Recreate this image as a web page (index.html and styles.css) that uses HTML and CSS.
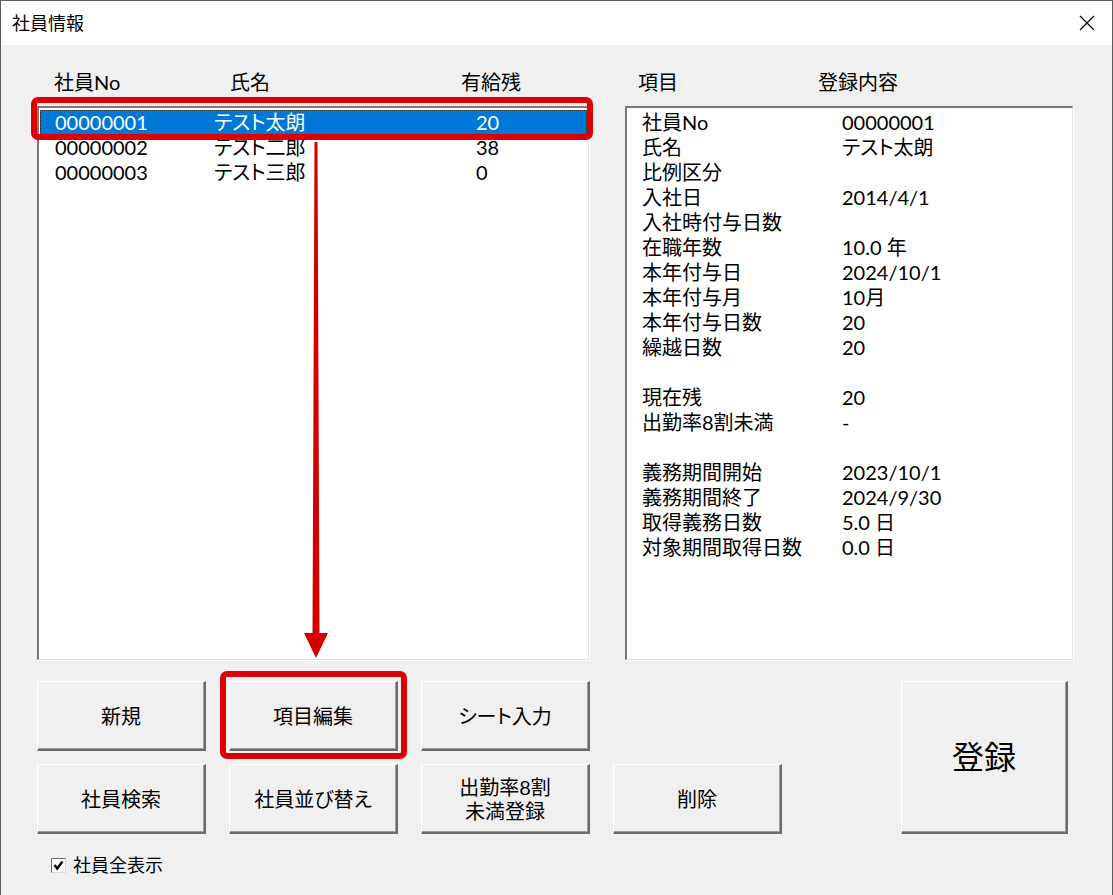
FILE: index.html
```html
<!DOCTYPE html>
<html lang="ja">

<head>
    <meta charset="UTF-8">
    <meta name="viewport" content="width=device-width, initial-scale=1.0">
    <title>社員情報</title>

    <link rel="stylesheet" href="styles.css">
</head>

<body>
    <div class="window">
        <div class="titlebar">
            <p class="title">社員情報</p>
            <div class="close">
                <svg width="16" height="16" viewBox="0 0 16 16">
                    <path d="M1 1 L15 15 M15 1 L1 15" stroke="#000" stroke-width="1.2" fill="none" />
                </svg>
            </div>
        </div>

        <div class="main">
            <div class="panel">
                <div class="list-head emp-cols">
                    <span>社員No</span>
                    <span>氏名</span>
                    <span>有給残</span>
                </div>
                <div class="listbox">
                    <div class="emp-row emp-cols selected">
                        <span>00000001</span><span>テスト太朗</span><span>20</span>
                    </div>
                    <div class="emp-row emp-cols">
                        <span>00000002</span><span>テスト二郎</span><span>38</span>
                    </div>
                    <div class="emp-row emp-cols">
                        <span>00000003</span><span>テスト三郎</span><span>0</span>
                    </div>
                </div>
            </div>

            <div class="panel">
                <div class="list-head detail-head">
                    <span>項目</span>
                    <span>登録内容</span>
                </div>
                <div class="listbox detail-box">
                    <span>社員No</span><span>00000001</span>
                    <span>氏名</span><span>テスト太朗</span>
                    <span>比例区分</span><span></span>
                    <span>入社日</span><span>2014/4/1</span>
                    <span>入社時付与日数</span><span></span>
                    <span>在職年数</span><span>10.0 年</span>
                    <span>本年付与日</span><span>2024/10/1</span>
                    <span>本年付与月</span><span>10月</span>
                    <span>本年付与日数</span><span>20</span>
                    <span>繰越日数</span><span>20</span>
                    <span></span><span></span>
                    <span>現在残</span><span>20</span>
                    <span>出勤率8割未満</span><span>-</span>
                    <span></span><span></span>
                    <span>義務期間開始</span><span>2023/10/1</span>
                    <span>義務期間終了</span><span>2024/9/30</span>
                    <span>取得義務日数</span><span>5.0 日</span>
                    <span>対象期間取得日数</span><span>0.0 日</span>
                </div>
            </div>
        </div>

        <div class="buttons">
            <button class="btn">新規</button>
            <button class="btn">項目編集</button>
            <button class="btn">シート入力</button>
            <button class="btn btn-big">登録</button>
            <button class="btn">社員検索</button>
            <button class="btn">社員並び替え</button>
            <button class="btn">出勤率8割<br>未満登録</button>
            <button class="btn">削除</button>
        </div>

        <label class="check-row">
            <span class="checkbox">
                <svg width="11" height="11" viewBox="0 0 11 11">
                    <path d="M1.5 5 L4.2 8.5 L9.5 1.5" stroke="#000" stroke-width="2.4" fill="none" />
                </svg>
            </span>
            社員全表示
        </label>
    </div>

    <!-- red annotations drawn on top of the dialog -->
    <svg class="marks" width="1113" height="895" viewBox="0 0 1113 895">
        <rect x="34" y="100" width="556" height="37" rx="4" fill="none" stroke="#dc0000" stroke-width="6" />
        <rect x="223" y="674" width="181" height="82" rx="4" fill="none" stroke="#dc0000" stroke-width="6" />
        <polygon points="314.5,142 317.5,142 319.5,633 328,633 316,658 304,633 312.5,633" fill="#d40000" />
    </svg>
</body>

</html>
```

FILE: styles.css
```css
/* Reset */
* {
    margin: 0;
    padding: 0;
    box-sizing: border-box;
}

body {
    background: #f0f0f0;
    font-family: 'Lato', 'Noto Sans CJK JP', sans-serif;
    font-feature-settings: "palt";
    color: #000;
}

/* Dialog window */
.window {
    width: 1113px;
    height: 895px;
    background: #f0f0f0;
    border: 1px solid #5c5c5c;
    border-bottom: none;
    overflow: hidden;
}

.titlebar {
    height: 44px;
    background: #fff;
    display: flex;
    align-items: center;
    padding-left: 11px;
}

.titlebar .title {
    font-size: 18px;
    line-height: 1;
}

.titlebar .close {
    margin-left: auto;
    width: 50px;
    height: 44px;
    display: flex;
    align-items: center;
    justify-content: center;
}

/* Lists */
.main {
    display: grid;
    grid-template-columns: 552px 448px;
    column-gap: 36px;
    padding-left: 36px;
}

.list-head {
    padding-top: 25px;
    height: 61px;
    font-size: 20px;
    line-height: 25px;
}

.emp-cols {
    display: grid;
    grid-template-columns: 159px 262px 1fr;
}

.list-head.emp-cols {
    grid-template-columns: 176px 231px 1fr;
    padding-left: 17px;
}

.detail-head {
    display: grid;
    grid-template-columns: 180px 1fr;
    padding-left: 13px;
}

.listbox {
    height: 554px;
    background: #fff;
    border-top: 2px solid #7a7a7a;
    border-left: 2px solid #7a7a7a;
    border-right: 1px solid #e3e3e3;
    border-bottom: 1px solid #e3e3e3;
    box-shadow: 1px 1px 0 #fff;
    padding: 2px 1px;
    font-size: 20px;
    line-height: 25px;
}

.emp-row {
    height: 25px;
    padding-left: 15px;
}

.emp-row.selected {
    background: #0078d7;
    color: #fff;
    outline: 1px dotted #222;
    outline-offset: -1px;
}

.detail-box {
    display: grid;
    grid-template-columns: 200px 1fr;
    grid-auto-rows: 25px;
    align-content: start;
    padding-left: 15px;
}

/* Buttons */
.buttons {
    display: grid;
    grid-template-columns: 169px 169px 169px 169px 73px 167px;
    grid-template-rows: 70px 70px;
    gap: 13px 23px;
    margin-top: 21px;
    padding-left: 36px;
}

.btn {
    background: #f0f0f0;
    border-top: 1px solid #fff;
    border-left: 1px solid #fff;
    border-right: 2px solid #6a6a6a;
    border-bottom: 2px solid #6a6a6a;
    box-shadow: inset -1px -1px 0 #a0a0a0;
    font-family: 'Lato', 'Noto Sans CJK JP', sans-serif;
    font-feature-settings: "palt";
    font-size: 20px;
    line-height: 24px;
    color: #000;
}

.btn-big {
    grid-column: 6;
    grid-row: 1 / 3;
    font-size: 32px;
}

.buttons .btn:nth-child(5) {
    grid-column: 1;
}

/* Checkbox */
.check-row {
    display: flex;
    align-items: center;
    gap: 7px;
    margin-top: 23px;
    padding-left: 50px;
    font-size: 18px;
    line-height: 16px;
}

.checkbox {
    width: 15px;
    height: 15px;
    background: #fff;
    border-top: 1px solid #6a6a6a;
    border-left: 1px solid #6a6a6a;
    border-right: 1px solid #dcdcdc;
    border-bottom: 1px solid #dcdcdc;
    display: flex;
    align-items: center;
    justify-content: center;
}

/* Annotations */
.marks {
    position: absolute;
    top: 0;
    left: 0;
    pointer-events: none;
}
```
